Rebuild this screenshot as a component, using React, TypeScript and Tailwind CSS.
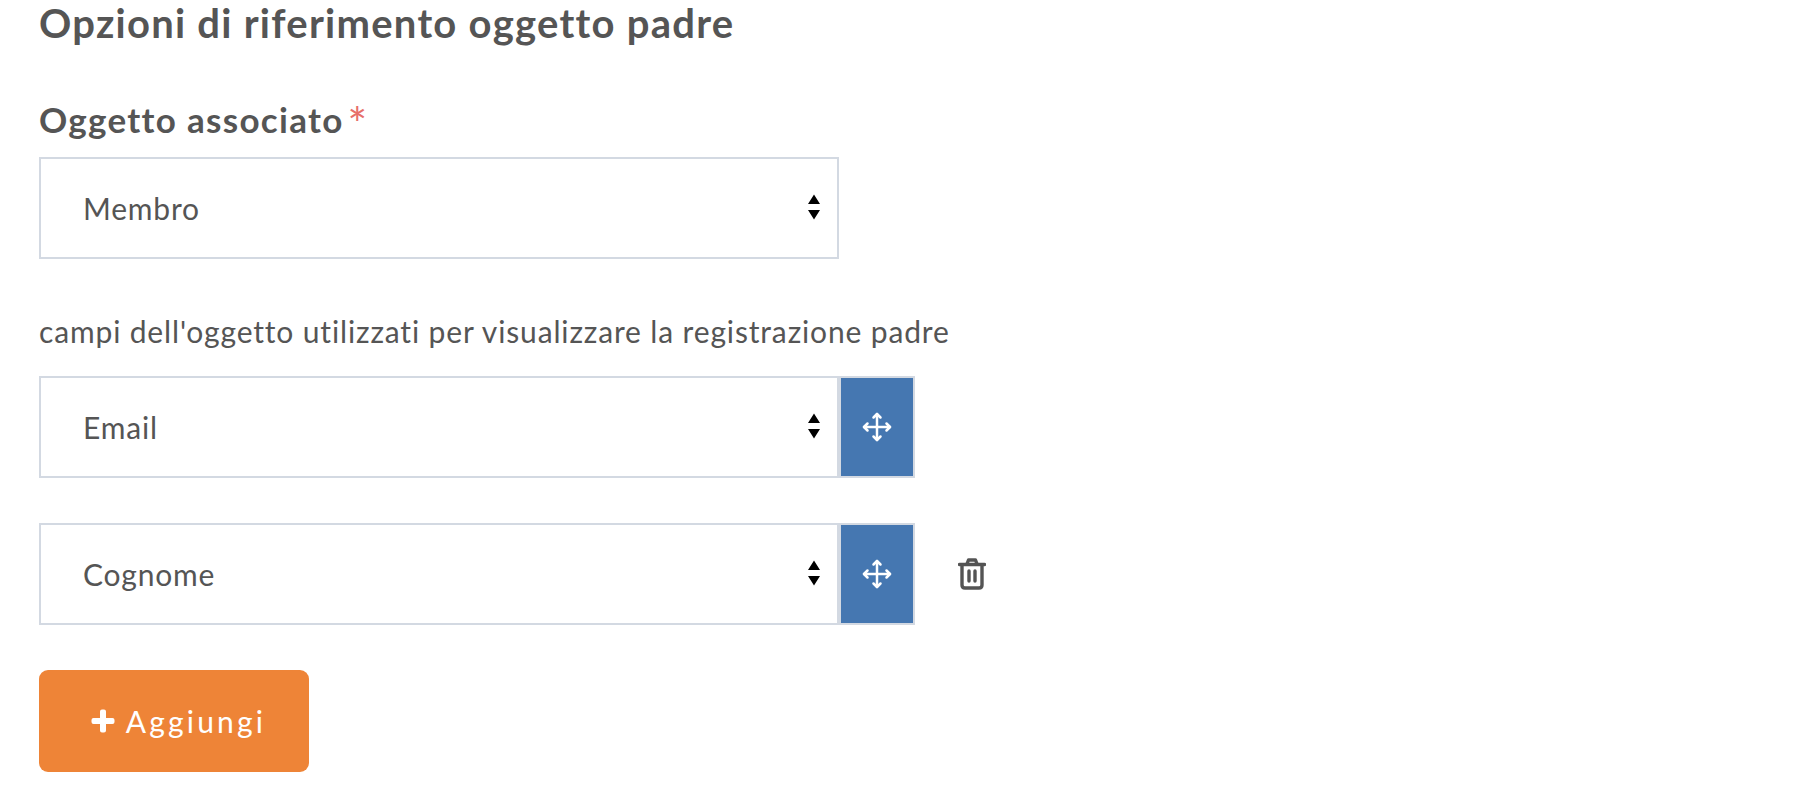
const fontStack = { fontFamily: "Lato, 'Noto Sans', sans-serif" };

// ─── Icons ──────────────────────────────────────────────────────────────────
function UpDown() {
  return (
    <svg width="12" height="26" viewBox="0 0 12 26" className="absolute right-[19px] top-[37px] pointer-events-none">
      <path d="M6 0.5 L12 10 H0 Z M0 16 H12 L6 25.5 Z" fill="#000" />
    </svg>
  );
}

function MoveIcon() {
  return (
    <svg width="30" height="30" viewBox="0 0 30 30" fill="none" stroke="#fff" strokeWidth="2.5" strokeLinecap="round" strokeLinejoin="round">
      <path d="M15 2 V28 M2 15 H28" />
      <path d="M11.5 5.5 L15 2 L18.5 5.5 M11.5 24.5 L15 28 L18.5 24.5 M5.5 11.5 L2 15 L5.5 18.5 M24.5 11.5 L28 15 L24.5 18.5" />
    </svg>
  );
}

function TrashIcon() {
  return (
    <svg width="28" height="32" viewBox="0 0 28 32" fill="none" stroke="#545454" strokeWidth="3.4" strokeLinecap="round" strokeLinejoin="round">
      <path d="M1.5 6.5 H26.5" />
      <path d="M9 6 L10.5 2 H17.5 L19 6" />
      <path d="M4 7 V27 Q4 30 7 30 H21 Q24 30 24 27 V7" />
      <path d="M11 13 V23 M17 13 V23" />
    </svg>
  );
}

// ─── Select row ─────────────────────────────────────────────────────────────
function SelectBox({ value }: { value: string }) {
  return (
    <div className="relative w-[800px] h-[102px] shrink-0">
      <select
        defaultValue={value}
        className="w-full h-full appearance-none bg-white border-2 border-[#d3d9e2] pl-[42px] text-[30px] tracking-[0.8px] text-[#555] outline-none"
        style={fontStack}
      >
        <option>{value}</option>
      </select>
      <UpDown />
    </div>
  );
}

function SortableRow({ value, removable }: { value: string; removable?: boolean }) {
  return (
    <div className="flex items-center">
      <SelectBox value={value} />
      <div className="w-[76px] h-[102px] flex items-center justify-center bg-[#4577b1] border-2 border-[#d3d9e2]">
        <MoveIcon />
      </div>
      {removable && (
        <div className="ml-[43px] flex items-center">
          <TrashIcon />
        </div>
      )}
    </div>
  );
}

export default function App() {
  return (
    <div className="h-[803px] w-full overflow-hidden bg-white pl-[39px] text-[#555]" style={fontStack}>
      <h2 className="text-[40px] font-bold leading-[46px] tracking-[1.25px]">Opzioni di riferimento oggetto padre</h2>

      <label className="mt-[51px] flex h-[44px] items-center text-[35px] font-bold tracking-[1.3px]">
        Oggetto associato
        <span className="ml-[4px] mt-[10px] text-[46px] font-normal leading-none text-[#e76f6a]">*</span>
      </label>

      <div className="mt-[16px]">
        <SelectBox value="Membro" />
      </div>

      <p className="mt-[52px] h-[40px] text-[30px] leading-[40px] tracking-[0.85px]">
        campi dell'oggetto utilizzati per visualizzare la registrazione padre
      </p>

      <div className="mt-[25px]">
        <SortableRow value="Email" />
      </div>
      <div className="mt-[45px]">
        <SortableRow value="Cognome" removable />
      </div>

      <button className="mt-[45px] flex h-[102px] w-[270px] items-center justify-center gap-[11px] rounded-[9px] bg-[#ee8437] pl-[9px] text-[30px] tracking-[3.2px] text-white">
        <svg width="24" height="24" viewBox="0 0 24 24" fill="#fff">
          <path d="M9 2.5 Q9 0.5 11 0.5 H13 Q15 0.5 15 2.5 V9 H21.5 Q23.5 9 23.5 11 V13 Q23.5 15 21.5 15 H15 V21.5 Q15 23.5 13 23.5 H11 Q9 23.5 9 21.5 V15 H2.5 Q0.5 15 0.5 13 V11 Q0.5 9 2.5 9 H9 Z" />
        </svg>
        Aggiungi
      </button>
    </div>
  );
}
